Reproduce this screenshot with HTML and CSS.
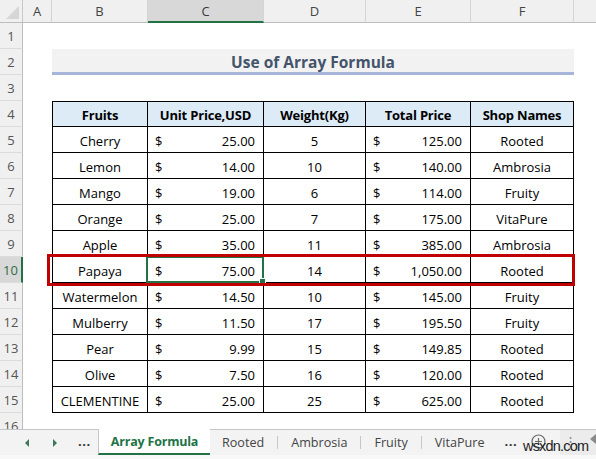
FILE: index.html
```html
<!DOCTYPE html>
<html>
<head>
<meta charset="utf-8">
<link rel="stylesheet" href="styles.css">
</head>
<body>
<div class="sheet">
  <div class="corner"><span class="tri"></span></div>
  <div class="ch">A</div><div class="ch">B</div><div class="ch selcol">C</div><div class="ch">D</div><div class="ch">E</div><div class="ch">F</div><div class="ch tail"></div>

  <div class="rh">1</div>
  <div class="rh">2</div><div class="title">Use of Array Formula</div>
  <div class="rh">3</div>

  <div class="rh">4</div>
  <div class="cell th first">Fruits</div><div class="cell th">Unit Price,USD</div><div class="cell th">Weight(Kg)</div><div class="cell th">Total Price</div><div class="cell th">Shop Names</div>

  <div class="rh">5</div>
  <div class="cell first">Cherry</div><div class="cell money"><span>$</span><span>25.00</span></div><div class="cell">5</div><div class="cell money"><span>$</span><span>125.00</span></div><div class="cell">Rooted</div>

  <div class="rh">6</div>
  <div class="cell first">Lemon</div><div class="cell money"><span>$</span><span>14.00</span></div><div class="cell">10</div><div class="cell money"><span>$</span><span>140.00</span></div><div class="cell">Ambrosia</div>

  <div class="rh">7</div>
  <div class="cell first">Mango</div><div class="cell money"><span>$</span><span>19.00</span></div><div class="cell">6</div><div class="cell money"><span>$</span><span>114.00</span></div><div class="cell">Fruity</div>

  <div class="rh">8</div>
  <div class="cell first">Orange</div><div class="cell money"><span>$</span><span>25.00</span></div><div class="cell">7</div><div class="cell money"><span>$</span><span>175.00</span></div><div class="cell">VitaPure</div>

  <div class="rh">9</div>
  <div class="cell first">Apple</div><div class="cell money"><span>$</span><span>35.00</span></div><div class="cell">11</div><div class="cell money"><span>$</span><span>385.00</span></div><div class="cell">Ambrosia</div>

  <div class="rh selrow">10</div>
  <div class="cell first">Papaya</div><div class="cell money active"><span>$</span><span>75.00</span></div><div class="cell">14</div><div class="cell money"><span>$</span><span>1,050.00</span></div><div class="cell">Rooted</div>

  <div class="rh">11</div>
  <div class="cell first">Watermelon</div><div class="cell money"><span>$</span><span>14.50</span></div><div class="cell">10</div><div class="cell money"><span>$</span><span>145.00</span></div><div class="cell">Fruity</div>

  <div class="rh">12</div>
  <div class="cell first">Mulberry</div><div class="cell money"><span>$</span><span>11.50</span></div><div class="cell">17</div><div class="cell money"><span>$</span><span>195.50</span></div><div class="cell">Fruity</div>

  <div class="rh">13</div>
  <div class="cell first">Pear</div><div class="cell money"><span>$</span><span>9.99</span></div><div class="cell">15</div><div class="cell money"><span>$</span><span>149.85</span></div><div class="cell">Rooted</div>

  <div class="rh">14</div>
  <div class="cell first">Olive</div><div class="cell money"><span>$</span><span>7.50</span></div><div class="cell">16</div><div class="cell money"><span>$</span><span>120.00</span></div><div class="cell">Rooted</div>

  <div class="rh">15</div>
  <div class="cell first">CLEMENTINE</div><div class="cell money"><span>$</span><span>25.00</span></div><div class="cell">25</div><div class="cell money"><span>$</span><span>625.00</span></div><div class="cell">Rooted</div>

  <div class="rh partial">16</div>

  <div class="highlight"></div>
</div>

<div class="tabbar">
  <div class="nav">
    <span class="arrow left"></span>
    <span class="arrow right"></span>
    <span class="dots">...</span>
  </div>
  <div class="tab active">Array Formula</div>
  <div class="tab">Rooted</div>
  <div class="sep"></div>
  <div class="tab">Ambrosia</div>
  <div class="sep"></div>
  <div class="tab">Fruity</div>
  <div class="sep"></div>
  <div class="tab">VitaPure</div>
  <div class="dots more">...</div>
  <div class="add">
    <svg width="15" height="15" viewBox="0 0 15 15"><circle cx="7.5" cy="7.5" r="6.5" fill="none" stroke="#6a6a6a" stroke-width="1.2"/><path d="M7.5 4v7M4 7.5h7" stroke="#6a6a6a" stroke-width="1.2"/></svg>
  </div>
  <div class="scroll">
    <span class="vdots">⋮</span>
    <span class="stri"></span>
  </div>
  <div class="watermark">wsxdn.com</div>
</div>
</body>
</html>
```

FILE: styles.css
```css
html, body {
  margin: 0;
  padding: 0;
  background: #ffffff;
}
body {
  width: 596px;
  height: 459px;
  overflow: hidden;
  font-family: "Open Sans", "Noto Sans", sans-serif;
}
.sheet {
  display: grid;
  grid-template-columns: 23px 29px 96px 116px 102px 105px 103px 22px;
  grid-template-rows: 23px repeat(15, 26px) 16px;
  height: 429px;
  overflow: hidden;
  position: relative;
}
.corner {
  background: #f0f0f0;
  border-right: 1px solid #c8c8c8;
  border-bottom: 1px solid #bdbdbd;
  box-sizing: border-box;
  position: relative;
}
.tri {
  position: absolute;
  right: 3px;
  bottom: 3px;
  width: 0;
  height: 0;
  border-left: 13px solid transparent;
  border-bottom: 13px solid #d6d6d6;
}
.ch {
  background: #f0f0f0;
  border-right: 1px solid #d4d4d4;
  border-bottom: 1px solid #bdbdbd;
  box-sizing: border-box;
  font-size: 13px;
  color: #444444;
  display: flex;
  align-items: center;
  justify-content: center;
}
.ch.tail {
  border-right: none;
}
.ch.selcol {
  background: #d8d8d8;
  border-bottom: 2px solid #217346;
  color: #3a3a3a;
}
.rh {
  grid-column: 1;
  background: #f0f0f0;
  border-right: 1px solid #bdbdbd;
  border-bottom: 1px solid #dcdcdc;
  box-sizing: border-box;
  font-size: 13px;
  color: #555555;
  display: flex;
  align-items: center;
  justify-content: center;
}
.rh.selrow {
  background: #d8d8d8;
  border-right: 2px solid #217346;
  color: #2f6b47;
}
.rh.partial {
  align-items: flex-start;
  line-height: 26px;
  overflow: hidden;
  border-bottom: none;
}
.title {
  grid-column: 3 / 8;
  background: #f2f2f2;
  border-bottom: 3px solid #a6b5d9;
  box-sizing: border-box;
  font-weight: 700;
  font-size: 15.5px;
  color: #44546a;
  display: flex;
  align-items: center;
  justify-content: center;
  padding-top: 2px;
}
.cell {
  border-right: 1px solid #000000;
  border-bottom: 1px solid #000000;
  box-sizing: border-box;
  font-size: 13px;
  color: #000000;
  display: flex;
  align-items: center;
  justify-content: center;
  white-space: nowrap;
  padding-top: 2px;
}
.cell.first {
  grid-column: 3;
  border-left: 1px solid #000000;
}
.cell.th {
  background: #ddebf7;
  border-top: 1px solid #000000;
  font-weight: 700;
  font-size: 13px;
  letter-spacing: -0.2px;
}
.cell.money {
  justify-content: space-between;
  padding-left: 7px;
  padding-right: 8px;
}
.cell.active {
  position: relative;
}
.cell.active::after {
  content: "";
  position: absolute;
  left: -2px;
  top: -1px;
  right: -1px;
  bottom: -1px;
  border: 2px solid #217346;
}
.cell.active::before {
  content: "";
  position: absolute;
  right: -3px;
  bottom: -3px;
  width: 5px;
  height: 5px;
  background: #217346;
  border: 1px solid #ffffff;
  z-index: 2;
}
.highlight {
  position: absolute;
  left: 47px;
  top: 254px;
  width: 528px;
  height: 32px;
  box-sizing: border-box;
  border: 3px solid #c00000;
  z-index: 3;
}

.tabbar {
  height: 30px;
  background: #f3f3f3;
  border-top: 1px solid #c6c6c6;
  box-sizing: border-box;
  display: flex;
  align-items: stretch;
  position: relative;
  border-bottom: 4px solid #f8f8f8;
}
.nav {
  width: 98px;
  flex: none;
  display: flex;
  align-items: center;
}
.arrow {
  width: 0;
  height: 0;
  border-top: 4px solid transparent;
  border-bottom: 4px solid transparent;
}
.arrow.left {
  margin-left: 25px;
  border-right: 4px solid #3d7a57;
}
.arrow.right {
  margin-left: 24px;
  border-left: 4px solid #3d7a57;
}
.dots {
  font-size: 13px;
  font-weight: 700;
  color: #333333;
  margin-left: 21px;
  letter-spacing: 0.5px;
  padding-bottom: 4px;
  white-space: nowrap;
}
.tab {
  font-size: 12.6px;
  color: #444444;
  display: flex;
  align-items: center;
  padding: 0 13px;
  white-space: nowrap;
  flex: none;
}
.tab.active {
  background: #ffffff;
  border-left: 1px solid #c6c6c6;
  border-bottom: 2px solid #217346;
  color: #217346;
  font-weight: 700;
  font-size: 12.5px;
  letter-spacing: -0.2px;
  padding: 0;
  margin-top: -1px;
  width: 112px;
  box-sizing: border-box;
  justify-content: center;
}
.tab.active + .tab {
  padding-left: 12px;
}
.sep {
  width: 1px;
  flex: none;
  background: #c6c6c6;
  margin: 6px 0 6px;
}
.dots.more {
  margin-left: 7px;
  display: flex;
  align-items: center;
  padding-bottom: 4px;
}
.add {
  display: flex;
  align-items: center;
  margin-left: 14px;
  padding-bottom: 2px;
}
.scroll {
  margin-left: auto;
  width: 36px;
  background: #ececec;
  display: flex;
  align-items: flex-start;
  position: relative;
}
.vdots {
  font-size: 13px;
  color: #888888;
  margin-left: 4px;
  margin-top: 2px;
}
.stri {
  position: absolute;
  right: 0;
  top: 4px;
  width: 0;
  height: 0;
  border-top: 5px solid transparent;
  border-bottom: 5px solid transparent;
  border-right: 6px solid #8a8a8a;
}
.watermark {
  position: absolute;
  left: 523px;
  top: 8px;
  font-family: "Liberation Sans", Arial, sans-serif;
  font-size: 14.5px;
  color: #222222;
  letter-spacing: -0.8px;
}
```
